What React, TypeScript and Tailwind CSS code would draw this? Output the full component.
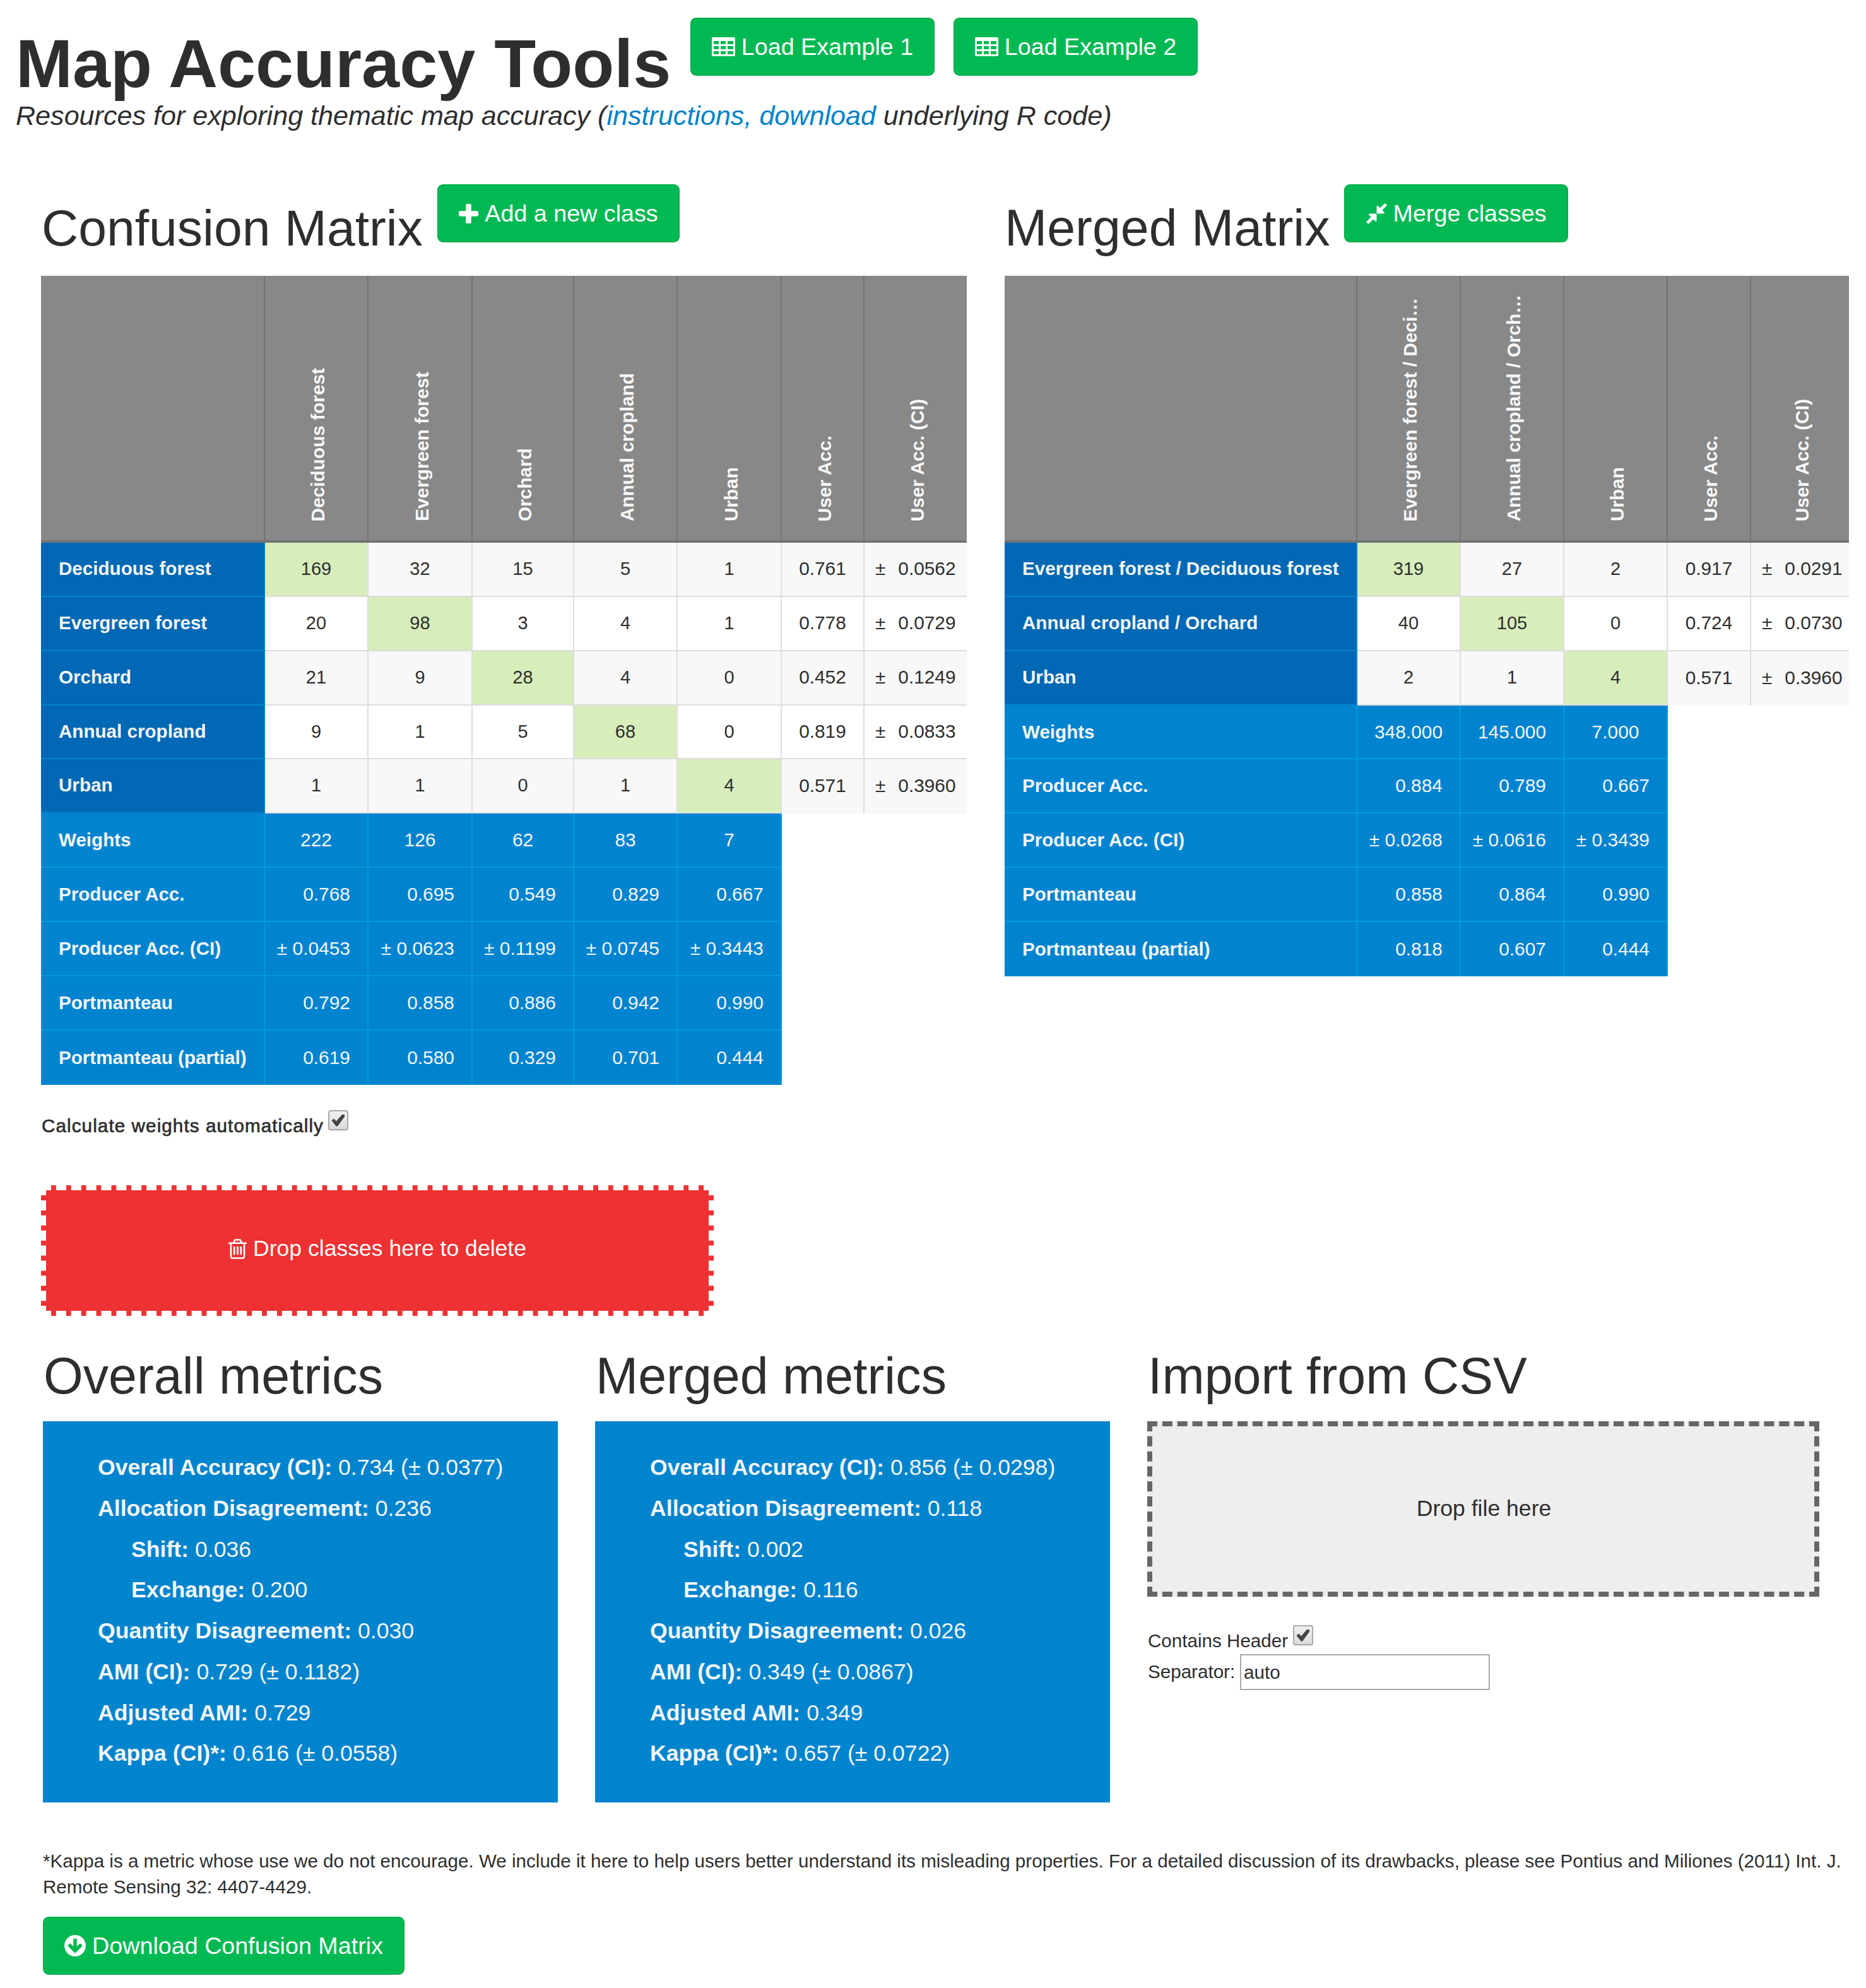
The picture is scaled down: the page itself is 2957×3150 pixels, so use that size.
import { useState } from "react"
import type { ReactNode } from "react"
import clsx from "clsx"

type MatrixRow = {
  label: string
  values: string[]
  userAcc: string
  userAccCi: string
}

type SummaryRow = {
  label: string
  values: string[]
  centered?: boolean
}

type Matrix = {
  columns: string[]
  rows: MatrixRow[]
  summary: SummaryRow[]
}

type Metric = {
  label: string
  value: string
  nested?: boolean
}

const confusionMatrix: Matrix = {
  columns: ["Deciduous forest", "Evergreen forest", "Orchard", "Annual cropland", "Urban"],
  rows: [
    { label: "Deciduous forest", values: ["169", "32", "15", "5", "1"], userAcc: "0.761", userAccCi: "0.0562" },
    { label: "Evergreen forest", values: ["20", "98", "3", "4", "1"], userAcc: "0.778", userAccCi: "0.0729" },
    { label: "Orchard", values: ["21", "9", "28", "4", "0"], userAcc: "0.452", userAccCi: "0.1249" },
    { label: "Annual cropland", values: ["9", "1", "5", "68", "0"], userAcc: "0.819", userAccCi: "0.0833" },
    { label: "Urban", values: ["1", "1", "0", "1", "4"], userAcc: "0.571", userAccCi: "0.3960" },
  ],
  summary: [
    { label: "Weights", values: ["222", "126", "62", "83", "7"], centered: true },
    { label: "Producer Acc.", values: ["0.768", "0.695", "0.549", "0.829", "0.667"] },
    { label: "Producer Acc. (CI)", values: ["± 0.0453", "± 0.0623", "± 0.1199", "± 0.0745", "± 0.3443"] },
    { label: "Portmanteau", values: ["0.792", "0.858", "0.886", "0.942", "0.990"] },
    { label: "Portmanteau (partial)", values: ["0.619", "0.580", "0.329", "0.701", "0.444"] },
  ],
}

const mergedMatrix: Matrix = {
  columns: ["Evergreen forest / Deci…", "Annual cropland / Orch…", "Urban"],
  rows: [
    { label: "Evergreen forest / Deciduous forest", values: ["319", "27", "2"], userAcc: "0.917", userAccCi: "0.0291" },
    { label: "Annual cropland / Orchard", values: ["40", "105", "0"], userAcc: "0.724", userAccCi: "0.0730" },
    { label: "Urban", values: ["2", "1", "4"], userAcc: "0.571", userAccCi: "0.3960" },
  ],
  summary: [
    { label: "Weights", values: ["348.000", "145.000", "7.000"], centered: true },
    { label: "Producer Acc.", values: ["0.884", "0.789", "0.667"] },
    { label: "Producer Acc. (CI)", values: ["± 0.0268", "± 0.0616", "± 0.3439"] },
    { label: "Portmanteau", values: ["0.858", "0.864", "0.990"] },
    { label: "Portmanteau (partial)", values: ["0.818", "0.607", "0.444"] },
  ],
}

const overallMetrics: Metric[] = [
  { label: "Overall Accuracy (CI):", value: "0.734 (± 0.0377)" },
  { label: "Allocation Disagreement:", value: "0.236" },
  { label: "Shift:", value: "0.036", nested: true },
  { label: "Exchange:", value: "0.200", nested: true },
  { label: "Quantity Disagreement:", value: "0.030" },
  { label: "AMI (CI):", value: "0.729 (± 0.1182)" },
  { label: "Adjusted AMI:", value: "0.729" },
  { label: "Kappa (CI)*:", value: "0.616 (± 0.0558)" },
]

const mergedMetrics: Metric[] = [
  { label: "Overall Accuracy (CI):", value: "0.856 (± 0.0298)" },
  { label: "Allocation Disagreement:", value: "0.118" },
  { label: "Shift:", value: "0.002", nested: true },
  { label: "Exchange:", value: "0.116", nested: true },
  { label: "Quantity Disagreement:", value: "0.026" },
  { label: "AMI (CI):", value: "0.349 (± 0.0867)" },
  { label: "Adjusted AMI:", value: "0.349" },
  { label: "Kappa (CI)*:", value: "0.657 (± 0.0722)" },
]

export default function App() {
  const [autoWeights, setAutoWeights] = useState(true)
  const [hasHeader, setHasHeader] = useState(true)
  const [separator, setSeparator] = useState("auto")

  return (
    <main className="h-[3150px] w-[2957px] overflow-hidden bg-white pt-7 font-['Liberation_Sans',Arial,sans-serif] text-[#2e2e2e]">
      <header className="pl-[25px]">
        <div className="flex items-start">
          <h1 className="mt-[19px] w-[1069px] text-[108px] leading-[108px] font-bold whitespace-nowrap">
            Map Accuracy Tools
          </h1>
          <GreenButton className="mr-[30px] w-[387px]">
            <TableIcon />
            Load Example 1
          </GreenButton>
          <GreenButton className="w-[387px]">
            <TableIcon />
            Load Example 2
          </GreenButton>
        </div>
        <p className="mt-[3px] text-[43.1px] leading-[50px] whitespace-nowrap italic">
          Resources for exploring thematic map accuracy (
          <a className="text-[#0082c8]">instructions, </a>
          <a className="text-[#0082c8]">download</a> underlying R code)
        </p>
      </header>

      <div className="mt-[84px] flex h-[1793px] pl-[65px]">
        <section className="w-[1527px] shrink-0">
          <div className="flex h-[145px] items-start">
            <h2 className="mt-[23px] w-[628px] pl-px text-[80.5px] leading-[92px] whitespace-nowrap">
              Confusion Matrix
            </h2>
            <GreenButton className="w-[384px]">
              <PlusIcon />
              Add a new class
            </GreenButton>
          </div>
          <MatrixTable
            matrix={confusionMatrix}
            widths={[355, 164, 165, 161, 164, 165, 131, 162]}
          />
          <label className="mt-10 flex h-[50px] items-start text-[29.6px]">
            <span className="w-[455px] pl-px leading-[50px] tracking-[1.1px] whitespace-nowrap [-webkit-text-stroke:0.7px_#2e2e2e]">
              Calculate weights automatically
            </span>
            <Checkbox checked={autoWeights} onChange={setAutoWeights} />
          </label>
          <div className="mt-[69px] flex h-[207px] w-[1066px] items-center justify-center gap-[10px] border-8 border-dashed border-white bg-[#ee3132] pb-[4px] text-[35.6px] text-white">
            <TrashIcon />
            Drop classes here to delete
          </div>
        </section>

        <section>
          <div className="flex h-[145px] items-start">
            <h2 className="mt-[23px] w-[538px] text-[80.7px] leading-[92px] whitespace-nowrap">Merged Matrix</h2>
            <GreenButton className="w-[355px]">
              <CompressIcon />
              Merge classes
            </GreenButton>
          </div>
          <MatrixTable matrix={mergedMatrix} widths={[559, 164, 164, 164, 132, 155]} />
        </section>
      </div>

      <div className="mt-[49px] flex items-start pl-[68px]">
        <MetricsPanel title="Overall metrics" metrics={overallMetrics} />
        <MetricsPanel title="Merged metrics" metrics={mergedMetrics} />
        <section className="w-[1065px] text-[29.6px]">
          <SectionTitle>Import from CSV</SectionTitle>
          <div className="flex h-[278px] items-center justify-center border-8 border-dashed border-[#666] bg-[#eee] pl-[2px] text-[35.6px]">
            Drop file here
          </div>
          <label className="mt-[45px] flex h-[46px] items-start">
            <span className="w-[231px] pl-px leading-[49px]">Contains Header</span>
            <Checkbox checked={hasHeader} onChange={setHasHeader} />
          </label>
          <label className="flex h-[57px] items-center">
            <span className="w-[147px] pl-px">Separator:</span>
            <input
              className="h-[57px] w-[396px] border-2 border-[#aaa] bg-white pl-1 outline-none"
              value={separator}
              onChange={(e) => setSeparator(e.target.value)}
            />
          </label>
        </section>
      </div>

      <footer className="mt-[71px] pl-[68px]">
        <p className="w-[2870px] pt-px text-[29.6px] leading-[41px]">
          *Kappa is a metric whose use we do not encourage. We include it here to help users better understand its
          misleading properties. For a detailed discussion of its drawbacks, please see Pontius and Miliones (2011) Int.
          J. Remote Sensing 32: 4407-4429.
        </p>
        <GreenButton className="mt-[27px] w-[573px]">
          <ArrowCircleDownIcon />
          Download Confusion Matrix
        </GreenButton>
      </footer>
    </main>
  )
}

function GreenButton({ className, children }: { className?: string; children: ReactNode }) {
  return (
    <button
      className={clsx(
        "flex h-[92px] shrink-0 items-center justify-center gap-[10px] rounded-[9px] border-2 border-[#00ad4b] bg-[#00b953] text-[37.7px] whitespace-nowrap text-white",
        className
      )}
    >
      {children}
    </button>
  )
}

function SectionTitle({ children }: { children: ReactNode }) {
  return <h2 className="mb-[26px] pl-px text-[80.7px] leading-[92px] whitespace-nowrap">{children}</h2>
}

function MatrixTable({ matrix, widths }: { matrix: Matrix; widths: number[] }) {
  const total = widths.reduce((sum, w) => sum + w, 0)
  const headers = [...matrix.columns, "User Acc.", "User Acc. (CI)"]

  return (
    <table
      className="table-fixed border-separate border-spacing-0 text-[29px] leading-[34px] whitespace-nowrap"
      style={{ width: total }}
    >
      <colgroup>
        {widths.map((w, i) => (
          <col key={i} style={{ width: w }} />
        ))}
      </colgroup>
      <thead>
        <tr className="h-[423px] bg-[#888]">
          <th className="border-r-2 border-b-4 border-[#737373]" />
          {headers.map((name, i) => (
            <th
              key={name}
              className={clsx(
                "border-b-4 border-[#737373] p-0 align-bottom text-[29.8px] text-[#f8f8f8]",
                i < headers.length - 1 && "border-r-2"
              )}
            >
              <div className="flex justify-center pb-[30px] pl-[6px]">
                <span className="rotate-180 [writing-mode:vertical-rl]">{name}</span>
              </div>
            </th>
          ))}
        </tr>
      </thead>
      <tbody>
        {matrix.rows.map((row, r) => {
          const lastRow = r === matrix.rows.length - 1
          return (
            <tr key={row.label} className={clsx("h-[85.86px]", r % 2 === 0 ? "bg-[#f8f8f8]" : "bg-white")}>
              <th className="border-r-2 border-b-2 border-[#0083d0] bg-[#0068b4] p-0 pb-[2px] pl-[28px] text-left text-[29.6px] text-[#f4f6f8]">
                {row.label}
              </th>
              {row.values.map((value, c) => (
                <td
                  key={c}
                  className={clsx(
                    "border-r-2 border-b-2 border-[#ddd] p-0 pb-[2px] text-center",
                    r === c && "bg-[#d7eebb]"
                  )}
                >
                  {value}
                </td>
              ))}
              <td
                className={clsx(
                  "border-r-2 border-[#ddd] p-0 pb-[2px] text-center text-[29.8px]",
                  !lastRow && "border-b-2"
                )}
              >
                {row.userAcc}
              </td>
              <td className={clsx("border-[#ddd] p-0 pb-[2px] pl-[17px] text-[29.8px]", !lastRow && "border-b-2")}>
                <div className="flex gap-[20px]">
                  <span>±</span>
                  <span>{row.userAccCi}</span>
                </div>
              </td>
            </tr>
          )
        })}
        {matrix.summary.map((row, r) => {
          const border = r < matrix.summary.length - 1 && "border-b-2"
          return (
            <tr key={row.label} className="h-[85.86px] text-[#f4f6f8]">
              <th
                className={clsx(
                  "border-r-2 border-[#0099e0] bg-[#0084d0] p-0 pl-[28px] text-left text-[29.6px]",
                  border
                )}
              >
                {row.label}
              </th>
              {row.values.map((value, c) => (
                <td
                  key={c}
                  className={clsx(
                    "border-r-2 border-[#0099e0] bg-[#0084d0] p-0 text-[29.9px]",
                    row.centered ? "text-center" : "pr-[27px] text-right",
                    border
                  )}
                >
                  {value}
                </td>
              ))}
            </tr>
          )
        })}
      </tbody>
    </table>
  )
}

function MetricsPanel({ title, metrics }: { title: string; metrics: Metric[] }) {
  return (
    <section className="w-[875px] shrink-0">
      <SectionTitle>{title}</SectionTitle>
      <div className="h-[604px] w-[816px] bg-[#0084ce] pt-[41px] pl-[87px] text-[35.65px] leading-[64.75px] text-[#f4f6f8]">
        {metrics.map((metric) => (
          <p key={metric.label} className={clsx("whitespace-nowrap", metric.nested && "pl-[53px]")}>
            <b>{metric.label}</b> {metric.value}
          </p>
        ))}
      </div>
    </section>
  )
}

function Checkbox({ checked, onChange }: { checked: boolean; onChange: (value: boolean) => void }) {
  return (
    <span className="flex size-8 items-center justify-center rounded-[4px] border-2 border-[#aaa] bg-linear-to-b from-[#efefef] to-[#dcdcdc] shadow-[0_2px_1px_#eee]">
      <input type="checkbox" className="sr-only" checked={checked} onChange={(e) => onChange(e.target.checked)} />
      {checked && (
        <svg className="size-6" viewBox="0 0 24 24" fill="#444">
          <path d="M1.5 12.5 5 9.5l4 4L18 3h4v3.500L11 21.500H8.500z" />
        </svg>
      )}
    </span>
  )
}

function TableIcon() {
  return (
    <svg className="h-[30px] w-[37px]" viewBox="0 0 37 30" fill="currentColor" fillRule="evenodd">
      <path d="M2 0h33a2 2 0 0 1 2 2v26a2 2 0 0 1-2 2H2a2 2 0 0 1-2-2V2a2 2 0 0 1 2-2zM3 6v5h8V6zM14 6v5h8V6zM25 6v5h9V6zM3 14v5h8v-5zM14 14v5h8v-5zM25 14v5h9v-5zM3 22v5h8v-5zM14 22v5h8v-5zM25 22v5h9v-5z" />
    </svg>
  )
}

function PlusIcon() {
  return (
    <svg className="size-[31px]" viewBox="192 128 1408 1408" fill="currentColor">
      <path d="M1600 736v192q0 40-28 68t-68 28h-416v416q0 40-28 68t-68 28h-192q-40 0-68-28t-28-68v-416h-416q-40 0-68-28t-28-68v-192q0-40 28-68t68-28h416v-416q0-40 28-68t68-28h192q40 0 68 28t28 68v416h416q40 0 68 28t28 68z" />
    </svg>
  )
}

function CompressIcon() {
  return (
    <svg className="size-[33px]" viewBox="141 133 1510 1527" fill="currentColor">
      <path d="M896 960v448q0 26-19 45t-45 19-45-19l-144-144-332 332q-10 10-23 10t-23-10l-114-114q-10-10-10-23t10-23l332-332-144-144q-19-19-19-45t19-45 45-19h448q26 0 45 19t19 45zm755-672q0 13-10 23l-332 332 144 144q19 19 19 45t-19 45-45 19h-448q-26 0-45-19t-19-45v-448q0-26 19-45t45-19 45 19l144 144 332-332q10-10 23-10t23 10l114 114q10 10 10 23z" />
    </svg>
  )
}

function TrashIcon() {
  return (
    <svg className="h-8 w-[29px]" viewBox="192 128 1408 1536" fill="currentColor">
      <path d="M704 736v576q0 14-9 23t-23 9h-64q-14 0-23-9t-9-23v-576q0-14 9-23t23-9h64q14 0 23 9t9 23zm256 0v576q0 14-9 23t-23 9h-64q-14 0-23-9t-9-23v-576q0-14 9-23t23-9h64q14 0 23 9t9 23zm256 0v576q0 14-9 23t-23 9h-64q-14 0-23-9t-9-23v-576q0-14 9-23t23-9h64q14 0 23 9t9 23zm128 724v-948h-896v948q0 22 7 40.500t14.500 27 10.500 8.500h832q3 0 10.500-8.500t14.500-27 7-40.500zm-672-1076h448l-48-117q-7-9-17-11h-317q-10 2-17 11zm928 32v64q0 14-9 23t-23 9h-96v948q0 83-47 143.500t-113 60.500h-832q-66 0-113-58.500t-47-141.500v-952h-96q-14 0-23-9t-9-23v-64q0-14 9-23t23-9h309l70-167q15-37 54-63t79-26h320q40 0 79 26t54 63l70 167h309q14 0 23 9t9 23z" />
    </svg>
  )
}

function ArrowCircleDownIcon() {
  return (
    <svg className="size-[34px]" viewBox="128 128 1536 1536" fill="currentColor">
      <path d="M1412 897q0-27-18-45l-91-91q-18-18-45-18t-45 18l-189 189v-502q0-26-19-45t-45-19h-128q-26 0-45 19t-19 45v502l-189-189q-19-19-45-19t-45 19l-91 91q-18 18-18 45t18 45l362 362 91 91q18 18 45 18t45-18l91-91 362-362q18-18 18-45zm252-1q0 209-103 385.500t-279.500 279.500-385.500 103-385.500-103-279.500-279.500-103-385.500 103-385.500 279.500-279.500 385.500-103 385.500 103 279.500 279.500 103 385.500z" />
    </svg>
  )
}
